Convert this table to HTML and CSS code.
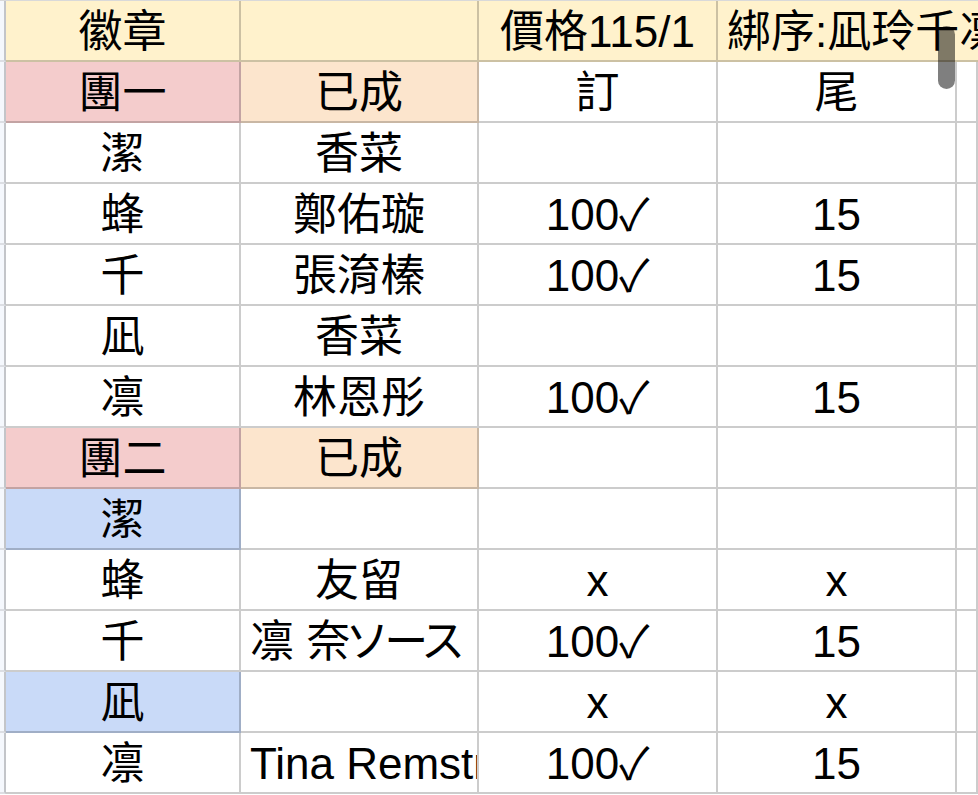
FILE: index.html
```html
<!DOCTYPE html>
<html lang="zh-Hant">
<head>
<meta charset="utf-8">
<title>Sheet</title>
<link rel="stylesheet" href="styles.css">
</head>
<body>
<div class="sheet">
  <div class="row">
    <div class="gut"></div>
    <div class="c yellow">徽章</div>
    <div class="c yellow"></div>
    <div class="c yellow">價格115/1</div>
    <div class="c yellow left span2">綁序:凪玲千凛</div>
  </div>
  <div class="row">
    <div class="gut"></div>
    <div class="c pink">團一</div>
    <div class="c peach">已成</div>
    <div class="c">訂</div>
    <div class="c">尾</div>
    <div class="c"></div>
  </div>
  <div class="row">
    <div class="gut"></div>
    <div class="c">潔</div>
    <div class="c">香菜</div>
    <div class="c"></div>
    <div class="c"></div>
    <div class="c"></div>
  </div>
  <div class="row">
    <div class="gut"></div>
    <div class="c">蜂</div>
    <div class="c">鄭佑璇</div>
    <div class="c">100✓</div>
    <div class="c">15</div>
    <div class="c"></div>
  </div>
  <div class="row">
    <div class="gut"></div>
    <div class="c">千</div>
    <div class="c">張淯榛</div>
    <div class="c">100✓</div>
    <div class="c">15</div>
    <div class="c"></div>
  </div>
  <div class="row">
    <div class="gut"></div>
    <div class="c">凪</div>
    <div class="c">香菜</div>
    <div class="c"></div>
    <div class="c"></div>
    <div class="c"></div>
  </div>
  <div class="row">
    <div class="gut"></div>
    <div class="c">凛</div>
    <div class="c">林恩彤</div>
    <div class="c">100✓</div>
    <div class="c">15</div>
    <div class="c"></div>
  </div>
  <div class="row">
    <div class="gut"></div>
    <div class="c pink">團二</div>
    <div class="c peach">已成</div>
    <div class="c"></div>
    <div class="c"></div>
    <div class="c"></div>
  </div>
  <div class="row">
    <div class="gut"></div>
    <div class="c blue">潔</div>
    <div class="c"></div>
    <div class="c"></div>
    <div class="c"></div>
    <div class="c"></div>
  </div>
  <div class="row">
    <div class="gut"></div>
    <div class="c">蜂</div>
    <div class="c">友留</div>
    <div class="c">x</div>
    <div class="c">x</div>
    <div class="c"></div>
  </div>
  <div class="row">
    <div class="gut"></div>
    <div class="c">千</div>
    <div class="c left">凛 <span class="kana">奈ソース</span></div>
    <div class="c">100✓</div>
    <div class="c">15</div>
    <div class="c"></div>
  </div>
  <div class="row">
    <div class="gut"></div>
    <div class="c blue">凪</div>
    <div class="c"></div>
    <div class="c">x</div>
    <div class="c">x</div>
    <div class="c"></div>
  </div>
  <div class="row">
    <div class="gut"></div>
    <div class="c">凛</div>
    <div class="c left">Tina Remstrom</div>
    <div class="c">100✓</div>
    <div class="c">15</div>
    <div class="c"></div>
  </div>
  <div class="scrollbar"></div>
</div>
</body>
</html>
```
FILE: styles.css
```css
html, body {
  margin: 0;
  padding: 0;
  background: #ffffff;
}
body {
  width: 978px;
  height: 795px;
  overflow: hidden;
  font-family: "Liberation Sans", "Noto Sans CJK TC", "Noto Sans CJK JP", sans-serif;
  color: #000;
}
.sheet {
  position: relative;
  border-top: 1px solid rgba(0, 0, 0, 0.15);
}
.row {
  display: grid;
  grid-template-columns: 6px 235px 238px 239px 239px 1fr;
  height: 61px;
}
.gut {
  background: #f5f8fd;
  border-right: 2px solid rgba(0, 0, 0, 0.2);
  border-bottom: 2px solid rgba(0, 0, 0, 0.1);
}
.c {
  box-sizing: border-box;
  height: 61px;
  border-right: 2px solid rgba(0, 0, 0, 0.2);
  border-bottom: 2px solid rgba(0, 0, 0, 0.2);
  padding: 2px 9px 0;
  font-size: 44px;
  line-height: 57px;
  text-align: center;
  white-space: nowrap;
  overflow: hidden;
}
.left {
  text-align: left;
}
.span2 {
  grid-column: span 2;
  border-right: none;
}
.kana {
  letter-spacing: -5px;
}
.yellow { background: #fff2cc; }
.pink { background: #f4cccc; }
.peach { background: #fce5cd; }
.blue { background: #c9daf8; }
.scrollbar {
  position: absolute;
  left: 938px;
  top: 25px;
  width: 17px;
  height: 63px;
  border-radius: 9px;
  background: rgba(0, 0, 0, 0.5);
}
```
